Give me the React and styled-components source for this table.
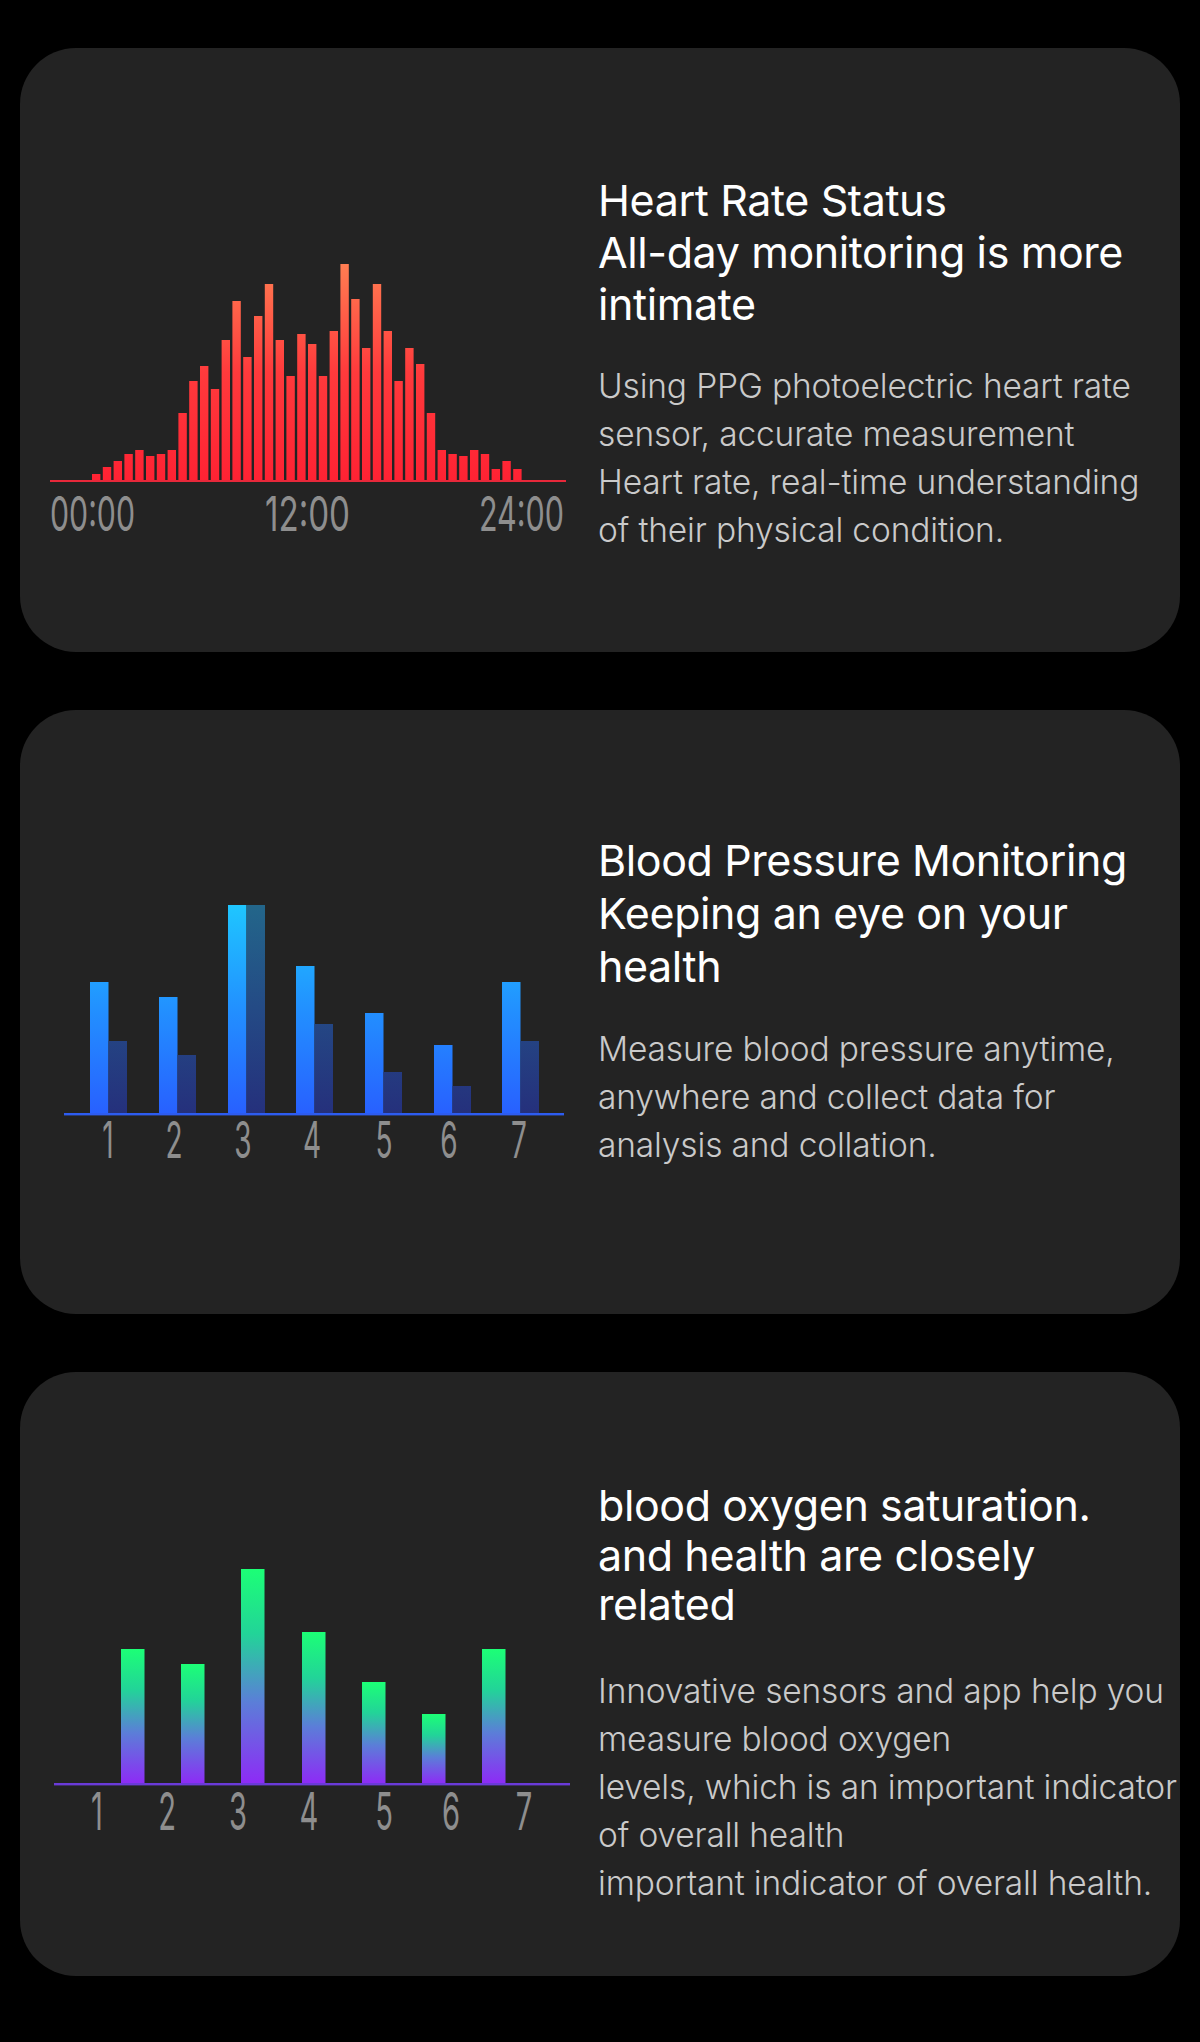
import React from "react";
import styled, { createGlobalStyle } from "styled-components";

const GlobalStyle = createGlobalStyle`
  html, body {
    margin: 0;
    padding: 0;
    background: #000;
  }
  body {
    font-family: Inter, "Noto Sans", "Liberation Sans", sans-serif;
    min-height: 2042px;
  }
`;

const Page = styled.main`
  display: flex;
  flex-direction: column;
  gap: 58px;
  padding: 48px 20px 66px;
  background: #000;
`;

const Card = styled.section`
  display: grid;
  grid-template-columns: 540px 1fr;
  column-gap: 18px;
  height: 604px;
  box-sizing: border-box;
  padding-left: 20px;
  background: #232323;
  border-radius: 56px;
  overflow: hidden;
`;

const ChartBox = styled.div`
  margin-top: ${(p) => p.$top}px;
  width: 540px;
  height: 340px;
  svg {
    display: block;
    overflow: visible;
  }
`;

const TextCol = styled.div`
  padding-top: ${(p) => p.$top}px;
  display: flex;
  flex-direction: column;
  gap: ${(p) => p.$gap}px;
`;

const Title = styled.h2`
  margin: 0;
  font-family: Inter, "Noto Sans", sans-serif;
  font-weight: 400;
  font-size: 43px;
  line-height: ${(p) => p.$lh || 52}px;
  color: #ffffff;
  letter-spacing: -0.4px;
`;

const Body = styled.p`
  margin: 0;
  font-family: Inter, "Noto Sans", sans-serif;
  font-weight: 300;
  font-size: 33.5px;
  line-height: 48px;
  color: #cacaca;
  letter-spacing: -0.15px;
`;

const Line = styled.span`
  display: block;
  white-space: nowrap;
`;

const LABEL = "#8e8e8e";

const heartHeights = [
  7, 14, 20, 27, 31, 25, 27, 31, 68, 100, 115, 92, 141, 180, 124, 165, 197,
  141, 105, 147, 137, 105, 150, 217, 182, 133, 197, 150, 100, 133, 117, 68, 31,
  27, 25, 31, 27, 12, 20, 12,
];

function HeartChart() {
  const base = 231;
  return (
    <svg width="540" height="340" viewBox="0 0 540 340">
      <defs>
        <linearGradient id="hr" gradientUnits="userSpaceOnUse" x1="0" y1={base - 217} x2="0" y2={base}>
          <stop offset="0" stopColor="#ff7d52" />
          <stop offset="0.5" stopColor="#ff3a3c" />
          <stop offset="1" stopColor="#ff2233" />
        </linearGradient>
      </defs>
      {heartHeights.map((h, i) => (
        <rect key={i} x={52 + i * 10.8} y={base - h} width={8.4} height={h} fill="url(#hr)" />
      ))}
      <rect x="10" y={base - 1} width="516" height="2" fill="#e8283a" />
      {[
        ["00:00", 10],
        ["12:00", 225],
        ["24:00", 439],
      ].map(([t, x]) => (
        <text
          key={t}
          x={x}
          y={281}
          fontFamily="Inter, 'Liberation Sans', sans-serif"
          fontWeight="400"
          fontSize="48"
          fill={LABEL}
          textLength="85"
          lengthAdjust="spacingAndGlyphs"
        >
          {t}
        </text>
      ))}
    </svg>
  );
}

function DigitLabels({ xs, y, size }) {
  return xs.map((x, i) => (
    <text
      key={i}
      transform={`translate(${x} ${y}) scale(0.56 1)`}
      textAnchor="middle"
      fontFamily="Inter, 'Liberation Sans', sans-serif"
      fontWeight="400"
      fontSize={size}
      fill={LABEL}
    >
      {i + 1}
    </text>
  ));
}

const bpData = [
  [50, 132, 73],
  [119, 117, 59],
  [188, 209, 209],
  [256, 148, 90],
  [325, 101, 42],
  [394, 69, 28],
  [462, 132, 73],
];

function PressureChart() {
  const base = 235;
  return (
    <svg width="540" height="340" viewBox="0 0 540 340">
      <defs>
        <linearGradient id="bpl" gradientUnits="userSpaceOnUse" x1="0" y1={base - 209} x2="0" y2={base}>
          <stop offset="0" stopColor="#1fc6ff" />
          <stop offset="0.5" stopColor="#2290ff" />
          <stop offset="1" stopColor="#2860ff" />
        </linearGradient>
        <linearGradient id="bpd" gradientUnits="userSpaceOnUse" x1="0" y1={base - 209} x2="0" y2={base}>
          <stop offset="0" stopColor="#23668a" />
          <stop offset="0.5" stopColor="#244a85" />
          <stop offset="1" stopColor="#25307c" />
        </linearGradient>
      </defs>
      {bpData.map(([x, a, b], i) => (
        <g key={i}>
          <rect x={x} y={base - a} width={18.5} height={a} fill="url(#bpl)" />
          <rect x={x + 18.5} y={base - b} width={18.5} height={b} fill="url(#bpd)" />
        </g>
      ))}
      <rect x="24" y={base - 1} width="500" height="2.4" fill="#2d5cf0" />
      <DigitLabels xs={[68, 134, 203, 272, 344, 409, 479]} y={279} size={50} />
    </svg>
  );
}

const oxData = [
  [81, 135],
  [141, 120],
  [201, 215],
  [262, 152],
  [322, 102],
  [382, 70],
  [442, 135],
];

function OxygenChart() {
  const base = 244;
  return (
    <svg width="540" height="340" viewBox="0 0 540 340">
      <defs>
        <linearGradient id="ox" x1="0" y1="0" x2="0" y2="1">
          <stop offset="0" stopColor="#1cff76" />
          <stop offset="0.3" stopColor="#22d498" />
          <stop offset="0.62" stopColor="#5b7ed8" />
          <stop offset="1" stopColor="#8e2af6" />
        </linearGradient>
      </defs>
      {oxData.map(([x, h], i) => (
        <rect key={i} x={x} y={base - h} width={23.5} height={h} fill="url(#ox)" />
      ))}
      <rect x="14" y={base - 1} width="516" height="2.4" fill="#6a3ad8" />
      <DigitLabels xs={[57, 127, 198, 269, 344, 411, 484]} y={290} size={52} />
    </svg>
  );
}

const cards = [
  {
    chart: <HeartChart />,
    chartTop: 202,
    textTop: 126,
    gap: 32,
    lh: 52,
    title: ["Heart Rate Status", "All-day monitoring is more", "intimate"],
    body: [
      "Using PPG photoelectric heart rate",
      "sensor, accurate measurement",
      "Heart rate, real-time understanding",
      "of their physical condition.",
    ],
  },
  {
    chart: <PressureChart />,
    chartTop: 169,
    textTop: 124,
    gap: 32,
    lh: 53,
    title: ["Blood Pressure Monitoring", "Keeping an eye on your", "health"],
    body: [
      "Measure blood pressure anytime,",
      "anywhere and collect data for",
      "analysis and collation.",
    ],
  },
  {
    chart: <OxygenChart />,
    chartTop: 168,
    textTop: 109,
    gap: 37,
    lh: 49.5,
    title: ["blood oxygen saturation.", "and health are closely", "related"],
    body: [
      "Innovative sensors and app help you",
      "measure blood oxygen",
      "levels, which is an important indicator",
      "of overall health",
      "important indicator of overall health.",
    ],
  },
];

export default function App() {
  return (
    <>
      <GlobalStyle />
      <Page>
        {cards.map((c, i) => (
          <Card key={i}>
            <ChartBox $top={c.chartTop}>{c.chart}</ChartBox>
            <TextCol $top={c.textTop} $gap={c.gap}>
              <Title $lh={c.lh}>
                {c.title.map((t) => (
                  <Line key={t}>{t}</Line>
                ))}
              </Title>
              <Body>
                {c.body.map((t) => (
                  <Line key={t}>{t}</Line>
                ))}
              </Body>
            </TextCol>
          </Card>
        ))}
      </Page>
    </>
  );
}
